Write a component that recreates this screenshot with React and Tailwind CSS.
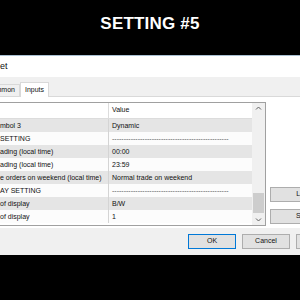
import React from 'react';

const DASH = '-'.repeat(50);

const rows = [
  ['mbol 3', 'Dynamic'],
  ['SETTING', DASH],
  ['ading (local time)', '00:00'],
  ['ading (local time)', '23:59'],
  ['e orders on weekend (local time)', 'Normal trade on weekend'],
  ['AY SETTING', DASH],
  ['of display', 'B/W'],
  ['of display', '1'],
];

const Chevron = ({ down }) => (
  <svg width="7" height="5" viewBox="0 0 7 5" fill="none" stroke="#606060" strokeWidth="1">
    {down ? <path d="M1 1.5l2.5 2.5 2.5-2.5" /> : <path d="M1 3.5l2.5-2.5 2.5 2.5" />}
  </svg>
);

const Btn = ({ children, primary, w = 'w-[48px]' }) => (
  <div
    className={`${w} h-[15px] shrink-0 flex items-center justify-center bg-[#e1e1e1] border text-[7px] text-[#111] ${
      primary ? 'border-[#0078d7]' : 'border-[#adadad]'
    }`}
  >
    {children}
  </div>
);

export default function App() {
  return (
    <div className="w-[300px] h-[300px] bg-black overflow-hidden flex flex-col font-['Liberation_Sans',Arial,sans-serif]">
      {/* caption */}
      <div className="h-[55px] shrink-0 pt-[15px] text-center text-white font-bold text-[17px] leading-[17px] tracking-[0.2px]">
        SETTING #5
      </div>

      {/* dialog */}
      <div className="w-[420px] shrink-0 border-t border-[#a9c0d2] bg-[#f0f0f0] flex flex-col">
        <div className="h-[21px] bg-white flex items-center text-[9px] text-[#111] pt-[1px]">et</div>

        {/* tabs */}
        <div className="h-[19px] flex items-end">
          <div className="w-[20px] h-[12px] overflow-hidden flex justify-end items-center pr-[4px] bg-[#f0f0f0] border-t border-r border-[#d9d9d9] text-[7px] text-[#111]">
            Common
          </div>
          <div className="relative z-10 -mb-px h-[15px] w-[29px] flex items-center justify-center bg-white border-t border-l border-r border-[#d9d9d9] text-[7px] text-[#111]">
            Inputs
          </div>
        </div>

        {/* page */}
        <div className="h-[132px] bg-white border-t border-[#d9d9d9] flex items-start pt-[5px]">
          <div className="-ml-px flex border border-[#a0a0a0] bg-white">
            <div className="flex flex-col w-[252px] h-[122px]">
              <div className="flex h-[16px] border-b border-[#dcdcdc] text-[7px] text-[#111]">
                <div className="w-[109px] border-r border-[#dcdcdc]" />
                <div className="flex-1 pl-[3px] flex items-center">Value</div>
              </div>
              {rows.map(([name, value], i) => (
                <div
                  key={i}
                  className={`flex h-[13px] text-[7px] leading-[13px] text-[#111] ${
                    i % 2 === 0 ? 'bg-[#e5e5e5]' : 'bg-[#fcfcfc]'
                  }`}
                >
                  <div className="w-[109px] shrink-0 border-r border-[#d4d4d4] whitespace-nowrap overflow-hidden">{name}</div>
                  <div className="flex-1 pl-[3px] whitespace-nowrap overflow-hidden">
                    <span className={value === DASH ? 'text-[#555]' : 'text-[#111]'}>{value}</span>
                  </div>
                </div>
              ))}
            </div>
            <div className="w-[13px] h-[122px] bg-[#f0f0f0] flex flex-col items-center">
              <div className="h-[10px] flex items-center justify-center pt-[1px]">
                <Chevron />
              </div>
              <div className="flex-1 w-full flex flex-col justify-end px-[1px] pb-[1px]">
                <div className="h-[20px] bg-[#cdcdcd]" />
              </div>
              <div className="h-[11px] flex items-center justify-center">
                <Chevron down />
              </div>
            </div>
          </div>

          <div className="ml-[4px] pt-[85px] flex flex-col gap-[7px]">
            <Btn w="w-[68px]">Load</Btn>
            <Btn w="w-[68px]">Save</Btn>
          </div>
        </div>

        {/* bottom buttons */}
        <div className="h-[27px] pl-[188px] pt-[6px] flex gap-[6px] items-start">
          <Btn primary>OK</Btn>
          <Btn>Cancel</Btn>
          <Btn>Reset</Btn>
        </div>
      </div>
    </div>
  );
}
